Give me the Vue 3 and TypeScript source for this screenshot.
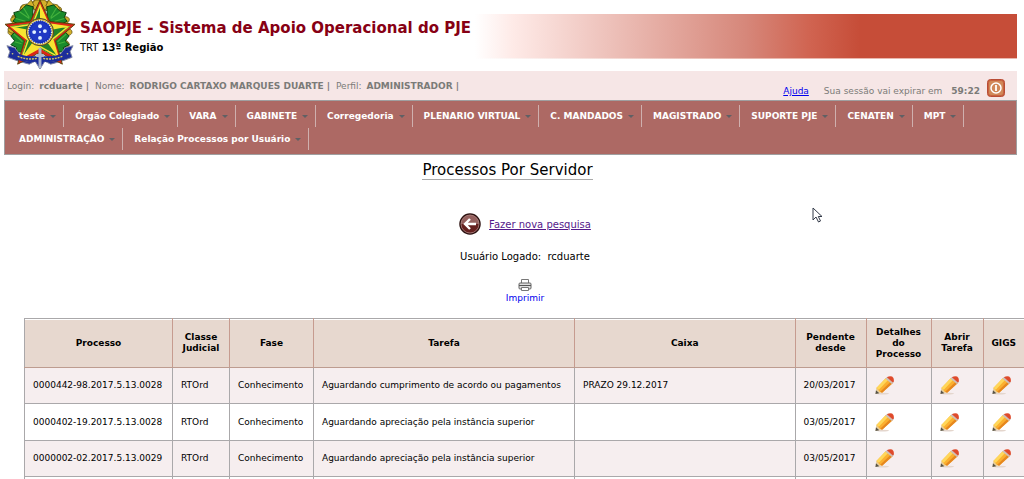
<script setup lang="ts">
interface Processo {
  numero: string
  classe: string
  fase: string
  tarefa: string
  caixa: string
  pendente: string
}

const menu: string[] = [
  'teste', 'Órgão Colegiado', 'VARA', 'GABINETE', 'Corregedoria', 'PLENARIO VIRTUAL',
  'C. MANDADOS', 'MAGISTRADO', 'SUPORTE PJE', 'CENATEN', 'MPT', 'ADMINISTRAÇÃO',
  'Relação Processos por Usuário',
]

const colunas: string[] = [
  'Processo', 'Classe Judicial', 'Fase', 'Tarefa', 'Caixa', 'Pendente desde',
  'Detalhes do Processo', 'Abrir Tarefa', 'GIGS',
]

const acoes: string[] = ['Detalhes do Processo', 'Abrir Tarefa', 'GIGS']

const processos: Processo[] = [
  { numero: '0000442-98.2017.5.13.0028', classe: 'RTOrd', fase: 'Conhecimento', tarefa: 'Aguardando cumprimento de acordo ou pagamentos', caixa: 'PRAZO 29.12.2017', pendente: '20/03/2017' },
  { numero: '0000402-19.2017.5.13.0028', classe: 'RTOrd', fase: 'Conhecimento', tarefa: 'Aguardando apreciação pela instância superior', caixa: '', pendente: '03/05/2017' },
  { numero: '0000002-02.2017.5.13.0029', classe: 'RTOrd', fase: 'Conhecimento', tarefa: 'Aguardando apreciação pela instância superior', caixa: '', pendente: '03/05/2017' },
]

const folhas: number[] = [-150, -125, -100, -75, -50, -25, 0, 25, 180, 205, -175]
</script>

<template>
  <div class="page">
    <header class="top">
      <svg class="crest" viewBox="0 0 72 72" aria-hidden="true">
        <g fill="#d3b02b" stroke="#55480c" stroke-width=".7">
          <ellipse v-for="a in folhas" :key="a" cx="64" cy="33" rx="5" ry="3.6" :transform="`rotate(${a} 36 33)`" />
          <path d="M27 5l4-5h10l4 5-4 6H31z" />
          <path d="M15 10l3-5 5-1 4-4 3 6-8 5zM57 10l-3-5-5-1-4-4-3 6 8 5z" />
        </g>
        <g fill="#1a8a2c" stroke="#083d10" stroke-width="1">
          <path d="M22 5l7 2-1 14-13 4-7-3 3-4-2-5 7-2z" />
          <path d="M50 5l-7 2 1 14 13 4 7-3-3-4 2-5-7-2z" />
          <path d="M8 28l9 2 6 10-4 14-8-1 1-4-6-3 4-4-4-5 4-4z" />
          <path d="M64 28l-9 2-6 10 4 14 8-1-1-4 6-3-4-4 4-5-4-4z" />
        </g>
        <g stroke="#43b13c" stroke-width="1.2" fill="none">
          <path d="M15 12l10 7M19 8l6 10M57 12l-10 7M53 8l-6 10M9 35l9 8M10 43l7 2M63 35l-9 8M62 43l-7 2M11 19l10 3M61 19l-10 3" />
        </g>
        <path d="M2 47l8 2 6 8 15 2h10l15-2 6-8 8-2-3 6 2 6-11 4-11 3-6-3-5 8-5-8-6 3-11-3-11-4 2-6z" fill="#1c2d9b" stroke="#8187a2" stroke-width="1" />
        <path d="M7 55l7 3 8 5 8-1M65 55l-7 3-8 5-8-1" fill="none" stroke="#e7dd6c" stroke-width="1.2" />
        <path d="M36 0L46 22 72 25 52 42 59 66 36 54 13 66 20 42 0 25 26 22z" fill="#db2518" stroke="#574408" stroke-width="1" />
        <path d="M36 4L45 24 67 27 50 41 56 61 36 50 16 61 22 41 5 27 27 24z" fill="#f7e531" />
        <path d="M36 4V30L27 24zM67 27L36 33l14 8zM56 61L36 33v17zM16 61l20-28-14 8zM5 27l31 6-9-9z" fill="#218329" />
        <path d="M36 6L43.500 25 64 28 48 41 54 58 36 48 18 58 24 41 8 28 28.500 25z" fill="none" stroke="#f7e531" stroke-width="1.500" />
        <path d="M10 53q10 7 26 4 16 3 26-4l3 5q-11 8-29 5-18 3-29-5z" fill="#1c2d9b" />
        <path d="M13 58q10 4 20 2M59 58q-10 4-20 2" fill="none" stroke="#d5c65c" stroke-width="1.500" stroke-dasharray="2 1" />
        <path d="M36 49v21M32 57h8" stroke="#a9b4cc" stroke-width="3" />
        <circle cx="36" cy="33" r="14" fill="#d9b728" stroke="#483d2e" />
        <circle cx="36" cy="33" r="12" fill="#1730b7" stroke="#dce5ff" stroke-width="1.5" stroke-dasharray="1 1.4" />
        <circle cx="36" cy="33" r="10" fill="#1f38c4" />
        <g fill="#e2f1ff">
          <circle cx="36" cy="27" r="2" /><circle cx="36" cy="39" r="2" /><circle cx="30" cy="33" r="2" /><circle cx="41" cy="32" r="2" /><circle cx="36" cy="33" r="1" />
        </g>
      </svg>
      <div class="brand">
        <h1>SAOPJE - Sistema de Apoio Operacional do PJE</h1>
        <p>TRT <b>13ª Região</b></p>
      </div>
      <div class="banner"></div>
    </header>

    <div class="userbar">
      <p class="user">Login: <b>rcduarte |</b> Nome: <b>RODRIGO CARTAXO MARQUES DUARTE |</b> Perfil: <b>ADMINISTRADOR |</b></p>
      <div class="session">
        <a href="#" class="help">Ajuda</a>
        <span>Sua sessão vai expirar em</span>
        <b>59:22</b>
      </div>
      <button type="button" class="power" aria-label="Sair">
        <svg viewBox="0 0 18 18">
          <rect x=".5" y=".5" width="17" height="17" rx="3" fill="#c7633f" stroke="#b94c35" />
          <rect x="2" y="2" width="14" height="14" rx="2" fill="#d18859" />
          <circle cx="9" cy="9" r="5" fill="none" stroke="#fff" stroke-width="1.5" />
          <path d="M9 6v6" stroke="#fff" stroke-width="1.8" />
        </svg>
      </button>
    </div>

    <nav class="menu" aria-label="Menu principal">
      <button v-for="item in menu" :key="item" type="button" class="item">
        {{ item }}<span class="caret"></span>
      </button>
    </nav>

    <main>
      <h2><span>Processos Por Servidor</span></h2>
      <div class="tools">
        <a href="#" class="back">
          <svg viewBox="0 0 22 22" aria-hidden="true">
            <circle cx="11" cy="11" r="10" fill="#65211f" stroke="#2c1110" stroke-width="1.5" />
            <path d="M2 11a9 9 0 0 1 18 0z" fill="#94605e" />
            <circle cx="11" cy="11" r="9" fill="none" stroke="#b99390" stroke-width=".7" />
            <path d="M17 11H6M11 6l-5 5 5 5" fill="none" stroke="#fff" stroke-width="2.4" />
          </svg>
          <span>Fazer nova pesquisa</span>
        </a>
        <p class="logged">Usuário Logado:&nbsp; rcduarte</p>
        <a href="#" class="print">
          <svg viewBox="0 0 14 14" aria-hidden="true">
            <path d="M3.5 5V1.5h7V5" fill="#fff" stroke="#777" />
            <rect x="1" y="5" width="12" height="6" rx="1" fill="#ddd" stroke="#666" />
            <path d="M1 7.5h12" stroke="#555" />
            <path d="M3.5 9.5h7v3h-7z" fill="#fff" stroke="#777" />
          </svg>
          <span>Imprimir</span>
        </a>
      </div>

      <table>
        <colgroup>
          <col class="c-num"><col class="c-classe"><col class="c-fase"><col class="c-tarefa"><col>
          <col class="c-data"><col class="c-det"><col class="c-abrir"><col class="c-gigs">
        </colgroup>
        <thead>
          <tr><th v-for="c in colunas" :key="c" scope="col">{{ c }}</th></tr>
        </thead>
        <tbody>
          <tr v-for="p in processos" :key="p.numero">
            <td>{{ p.numero }}</td>
            <td>{{ p.classe }}</td>
            <td>{{ p.fase }}</td>
            <td>{{ p.tarefa }}</td>
            <td>{{ p.caixa }}</td>
            <td>{{ p.pendente }}</td>
            <td v-for="a in acoes" :key="a">
              <a href="#" class="edit" :aria-label="a">
                <svg viewBox="0 0 20 20">
                  <ellipse cx="8" cy="18.500" rx="7" ry="1" fill="#e4d6cd" />
                  <path d="M.5 19L1.500 12 7.500 17z" fill="#e9cf9b" />
                  <path d="M.5 19l.5-4 3.500 3.200z" fill="#55524a" />
                  <path d="M1.500 12.500L11.500 2 18.500 7.500 7.500 17.500 5 16.500z" fill="#fbb02f" />
                  <path d="M1.500 12.500L11.500 2l2.500 2L4 14.500z" fill="#ffd75a" />
                  <path d="M5.500 16.500L16.500 6l2 1.500-11 10z" fill="#e6871f" />
                  <path d="M10.800 2.700l2.200-2 7 5.600-2.200 2z" fill="#cfbfb6" />
                  <path d="M12.500 1.200Q15-.3 18 .4 20.300 2 19.800 5.500l-1 1.300z" fill="#df4a2b" />
                </svg>
              </a>
            </td>
          </tr>
          <tr><td v-for="n in 9" :key="n"></td></tr>
        </tbody>
      </table>
    </main>

    <svg class="pointer" viewBox="0 0 11 16" aria-hidden="true">
      <path d="M1 1v12l3-3 2.500 5 2-1L6.300 9.500H10z" fill="#fff" stroke="#333a48" />
    </svg>
  </div>
</template>

<style>
body {
  overflow: hidden;
  background: #fff;
}
</style>

<style scoped>
.page {
  position: relative;
  height: 100vh;
  overflow: hidden;
  color: #000;
  font-family: Verdana, "DejaVu Sans", sans-serif;
  font-size: 9px;
}
h1, h2, p { margin: 0; }
button {
  border: 0;
  padding: 0;
  background: none;
  font: inherit;
  cursor: pointer;
}
svg { display: block; }
.top {
  display: flex;
  height: 71px;
  padding: 0 7px 0 4px;
}
.crest { width: 72px; height: 70px; }
.brand { padding: 18px 4px 0 4px; white-space: nowrap; }
h1 {
  color: #870014;
  font-size: 15px;
  line-height: 20px;
}
.brand p { margin-top: 4px; font-size: 10px; line-height: 12px; }
.banner {
  flex: 1;
  height: 44px;
  margin-top: 14px;
  border-bottom: 1px solid #e9b8ae;
  border-image: linear-gradient(90deg, #fff, #e9b8ae 50%) 1;
  background: linear-gradient(90deg, #fff 0%, #feeae7 7%, #d6877a 50%, #d06350 62%, #c64d38 71%);
}
.userbar {
  display: flex;
  height: 29px;
  margin: 0 7px 0 4px;
  padding: 0 12px 0 3px;
  background: #f6e6e6;
  color: #7b7b78;
}
.user { flex: 1; line-height: 30px; white-space: nowrap; }
.user b { margin: 0 3px 0 2px; }
.session {
  display: flex;
  gap: 9px;
  padding-top: 14px;
  line-height: 12px;
  white-space: nowrap;
}
.help { margin-right: 6px; color: #00e; }
.power { width: 18px; height: 18px; margin: 8px 0 0 7px; }
.menu {
  display: flex;
  flex-wrap: wrap;
  gap: 1px 0;
  margin: 0 7px 0 4px;
  padding: 4px 3px;
  border: 1px solid #a09fa0;
  background: #ad6964;
}
.item {
  display: flex;
  align-items: center;
  height: 22px;
  padding: 0 7px 0 11px;
  border-right: 1px solid #cfb0ae;
  color: #fff;
  font-weight: bold;
  white-space: nowrap;
}
.caret {
  margin-left: 5px;
  border: 3px solid transparent;
  border-top-color: #5f6064;
  border-bottom: 0;
}
h2 {
  margin: 7px 9px 0 0;
  font-size: 15px;
  font-weight: normal;
  line-height: 17px;
  text-align: center;
}
h2 span { display: inline-block; border-bottom: 1px solid #aaa; }
.tools {
  display: flex;
  flex-direction: column;
  align-items: center;
  padding: 33px 0 0 26px;
}
.back {
  display: flex;
  align-items: center;
  gap: 8px;
  color: #551a8b;
  font-size: 10px;
}
.back svg { width: 22px; height: 22px; }
.logged { margin-top: 14px; font-size: 10px; line-height: 16px; }
.print {
  display: flex;
  flex-direction: column;
  align-items: center;
  margin-top: 13px;
  color: #00e;
  font-size: 9px;
  line-height: 12px;
  text-decoration: none;
}
.print svg { width: 14px; height: 14px; }
table {
  width: calc(100% - 24px);
  margin: 14px 0 0 24px;
  border-collapse: collapse;
  table-layout: fixed;
  line-height: 11px;
}
.c-num { width: 148px; }
.c-classe { width: 57px; }
.c-fase { width: 84px; }
.c-tarefa { width: 261px; }
.c-data { width: 71px; }
.c-det { width: 65px; }
.c-abrir { width: 52px; }
.c-gigs { width: 41px; }
th, td { box-sizing: border-box; border: 1px solid #aaa8aa; white-space: nowrap; }
th:last-child, td:last-child { border-right: 0; }
th {
  height: 49px;
  padding: 0 7px;
  border-color: #aaa8aa #c69b8f #bd9c90;
  background: #e7d8cf;
  box-shadow: inset 0 1px #fff;
  white-space: normal;
}
th:first-child { border-left-color: #aaa8aa; }
td { height: 36px; padding: 0 8px; }
tbody tr:nth-child(odd) { background: #f6eeef; }
tbody tr:nth-child(even) td { height: 37px; }
.edit { display: block; width: 19px; }
.edit svg { width: 19px; height: 19px; }
.pointer {
  position: absolute;
  top: 207px;
  left: 812px;
  width: 11px;
  height: 16px;
}
</style>
